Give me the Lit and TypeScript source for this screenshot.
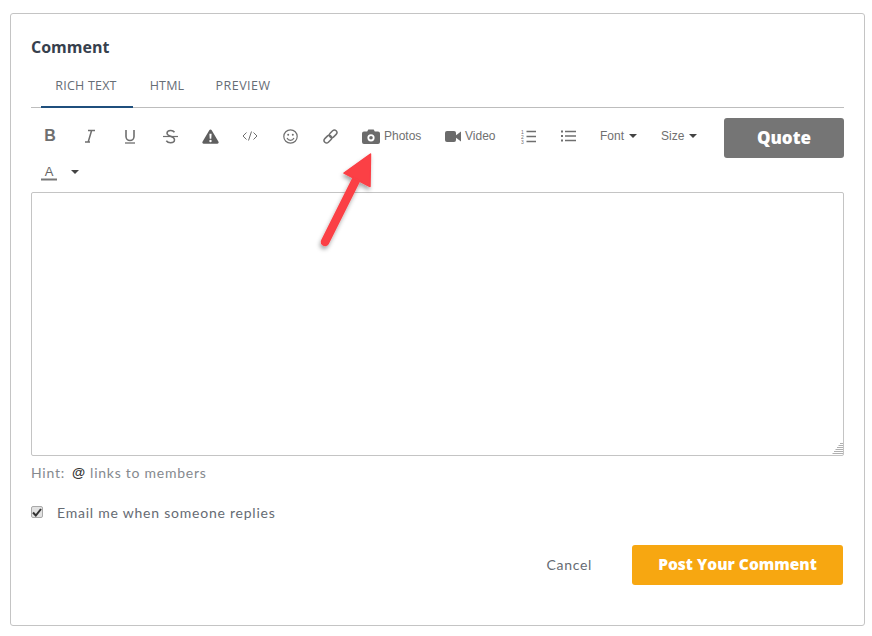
import { LitElement, html, css, svg } from "lit";
import { customElement } from "lit/decorators.js";

const ic = (w: number, h: number, body: unknown) =>
  html`<svg width=${w} height=${h} viewBox="0 0 ${w} ${h}" aria-hidden="true">${body}</svg>`;

@customElement("app-root")
export class AppRoot extends LitElement {
  static styles = css`
    :host { display: block; width: 872px; height: 636px; background: #fff; font-family: Lato, "Open Sans", sans-serif; box-sizing: border-box; padding: 13px 7px 0 10px; position: relative; }
    * { box-sizing: border-box; }
    .card { width: 855px; height: 613px; border: 1px solid #c4c4c4; border-radius: 3px; padding: 0 20px; }
    h2 { margin: 0; padding-top: 22px; height: 49px; font: 700 16px/22px "Open Sans", sans-serif; color: #36404d; }
    .tabs { display: flex; height: 45px; border-bottom: 1px solid #bdbdbd; }
    .tab { font: 400 12.5px/16px "Open Sans", sans-serif; color: #666d75; height: 45px; padding-top: 15px; text-align: center; letter-spacing: 0.2px; white-space: nowrap; }
    .tab.on { width: 92px; margin-left: 10px; padding-right: 2px; border-bottom: 2px solid #1f4f7d; }
    .tab.h { width: 68px; }
    .tab.p { width: 68px; margin-left: 8px; letter-spacing: 0.45px; }
    .toolbar { display: flex; justify-content: space-between; padding-top: 10px; height: 84px; }
    .rows { display: flex; flex-direction: column; margin-left: -1px; }
    .row { display: flex; height: 36px; align-items: center; }
    .b { width: 40px; height: 36px; display: flex; align-items: center; justify-content: center; color: #6f6f6f; font-family: "Liberation Sans", sans-serif; }
    .bold { font-weight: 700; font-size: 16px; }
    .l { font-size: 12px; color: #707070; font-family: "Liberation Sans", sans-serif; display: flex; align-items: center; height: 36px; }
    .photos { margin-left: 12px; width: 83px; gap: 4px; }
    .video { width: 60px; gap: 4px; }
    .ol { margin-left: 3px; }
    .font { margin-left: 12px; width: 61px; gap: 5px; }
    .size { width: 38px; gap: 5px; }
    .caret { width: 0; height: 0; border-left: 4px solid transparent; border-right: 4px solid transparent; border-top: 4px solid #444; }
    .color { width: 38px; }
    .color-caret { margin-left: 3px; margin-top: -1px; }
    .quote { width: 120px; height: 40px; background: #757575; color: #fff; border-radius: 3px; font: 800 17px/40px "Open Sans", sans-serif; text-align: center; }
    .ta { height: 264px; border: 1px solid #c4c4c4; border-radius: 2px; position: relative; }
    .grip { position: absolute; right: 0; bottom: 0; }
    .hint { margin-top: 8px; font-size: 14px; line-height: 18px; color: #85898e; letter-spacing: 0.75px; display: flex; }
    .at { color: #333; font-family: "Liberation Sans", sans-serif; font-weight: 700; margin-left: 7px; margin-right: 5px; font-size: 13.5px; letter-spacing: 0; }
    .email { margin-top: 22px; display: flex; align-items: center; font-size: 14px; line-height: 18px; color: #666b73; letter-spacing: 0.77px; }
    .cb { width: 12px; height: 12px; border: 1px solid #a9a9a9; border-radius: 2px; background: #e2e2e2; display: flex; align-items: center; justify-content: center; margin-right: 14px; margin-bottom: 2px; }
    .actions { display: flex; justify-content: flex-end; align-items: center; margin-top: 23px; }
    .cancel { font-size: 14px; letter-spacing: 0.7px; color: #666b73; margin-right: 40px; margin-bottom: 2px; }
    .post { width: 211px; height: 40px; margin-right: 1px; background: #f7a711; color: #fff; border-radius: 3px; font: 800 15.5px/38px "Open Sans", sans-serif; text-align: center; }
    .arrow { position: absolute; left: 310px; top: 150px; }
  `;

  render() {
    const stroke = "#6f6f6f";
    return html`<div class="card">
      <h2>Comment</h2>
      <div class="tabs">
        <div class="tab on">RICH TEXT</div><div class="tab h">HTML</div><div class="tab p">PREVIEW</div>
      </div>
      <div class="toolbar">
        <div class="rows">
          <div class="row">
            <div class="b bold">B</div>
            <div class="b">${ic(14, 14, svg`<path d="M5 1.500h7M2 13h5M8.600 1.500 5.200 13" stroke=${stroke} stroke-width="1.500" fill="none"/>`)}</div>
            <div class="b">${ic(12, 15, svg`<path d="M2 1v6.500a4 4 0 0 0 8 0V1" stroke=${stroke} stroke-width="1.600" fill="none"/><path d="M1 14h10" stroke=${stroke} stroke-width="1.300"/>`)}</div>
            <div class="b">${ic(15, 15, svg`<path d="M11.500 3.200C10.500 1.800 9 1.300 7.500 1.400 5.500 1.500 4 2.600 4 4.200c0 3.600 7.500 2.500 7.500 6.600 0 1.800-1.700 3-4 3-1.700 0-3.300-.7-4.200-2" stroke=${stroke} stroke-width="1.500" fill="none"/><path d="M0 7.500h15" stroke=${stroke} stroke-width="1.200"/>`)}</div>
            <div class="b">${ic(17, 15, svg`<path fill-rule="evenodd" d="M8.500.5c.5 0 1 .3 1.200.7l6.800 11.600c.5.900-.1 1.900-1.200 1.900H1.700c-1.100 0-1.700-1-1.200-1.900L7.300 1.200c.2-.4.700-.7 1.200-.7ZM7.400 4.800l.3 5h1.600l.3-5H7.400Zm1.100 6a1.200 1.200 0 1 0 0 2.400 1.200 1.200 0 0 0 0-2.400Z" fill="#5f5f5f"/>`)}</div>
            <div class="b">${ic(16, 10, svg`<path d="M4.500 1.500 1 5l3.500 3.500M11.500 1.500 15 5l-3.500 3.500M9.500.5l-3 9" stroke=${stroke} stroke-width="1" fill="none"/>`)}</div>
            <div class="b">${ic(15, 15, svg`<circle cx="7.500" cy="7.500" r="6.700" stroke=${stroke} stroke-width="1.200" fill="none"/><circle cx="5.200" cy="5.800" r="1" fill=${stroke}/><circle cx="9.800" cy="5.800" r="1" fill=${stroke}/><path d="M4 9c.8 1.600 2 2.300 3.500 2.300S10.200 10.600 11 9" stroke=${stroke} stroke-width="1.200" fill="none"/>`)}</div>
            <div class="b">${ic(15, 15, svg`<g transform="rotate(-45 7.500 7.500)" stroke=${stroke} stroke-width="1.500" fill="none"><rect x="-.5" y="5" width="8.500" height="5" rx="2.500"/><rect x="7" y="5" width="8.500" height="5" rx="2.500"/></g>`)}</div>
            <div class="l photos">${ic(18, 15, svg`<path fill-rule="evenodd" d="M2 2.500h3.200L6.300.5h5.400l1.100 2H16a2 2 0 0 1 2 2V13a2 2 0 0 1-2 2H2a2 2 0 0 1-2-2V4.500a2 2 0 0 1 2-2Zm7 2.700a3.600 3.600 0 1 0 0 7.200 3.600 3.600 0 0 0 0-7.200Zm0 1.800a1.800 1.800 0 1 1 0 3.600 1.800 1.800 0 0 1 0-3.600Z" fill="#6b6b6b"/>`)}<span>Photos</span></div>
            <div class="l video">${ic(16, 13, svg`<rect x="0" y="1" width="11" height="11" rx="2" fill="#6b6b6b"/><path d="M11 5.200 16 1.500v10L11 7.800Z" fill="#6b6b6b"/>`)}<span>Video</span></div>
            <div class="b ol">${ic(15, 15, svg`<path d="M5.500 2.500H15M5.500 7.500H15M5.500 12.500H15" stroke=${stroke} stroke-width="1.500"/><text x="0" y="4.500" font-size="5" font-family="Liberation Sans" fill=${stroke}>1</text><text x="0" y="9.500" font-size="5" font-family="Liberation Sans" fill=${stroke}>2</text><text x="0" y="14.500" font-size="5" font-family="Liberation Sans" fill=${stroke}>3</text>`)}</div>
            <div class="b">${ic(15, 12, svg`<path d="M4 1.500h11M4 6h11M4 10.500h11" stroke=${stroke} stroke-width="1.500"/><path d="M0 1.500h2M0 6h2M0 10.500h2" stroke=${stroke} stroke-width="1.800"/>`)}</div>
            <div class="l font"><span>Font</span><i class="caret"></i></div>
            <div class="l size"><span>Size</span><i class="caret"></i></div>
          </div>
          <div class="row">
            <div class="b color">${ic(16, 17, svg`<text x="8" y="11.500" text-anchor="middle" font-size="13" font-family="Liberation Sans" fill="#666">A</text><path d="M0 15.500h16" stroke="#777" stroke-width="2"/>`)}</div>
            <i class="caret color-caret"></i>
          </div>
        </div>
        <div class="quote">Quote</div>
      </div>
      <div class="ta">
        <svg class="grip" width="11" height="13" viewBox="0 0 11 13" aria-hidden="true"><path d="M8 1.500h3M6.500 3.500H11M5 5.500h6M3.500 7.500H11M2 9.500h9M.5 11.500H11" stroke="#b0b0b0" stroke-width="1" fill="none"/></svg>
      </div>
      <div class="hint"><span>Hint:</span><span class="at">@</span><span>links to members</span></div>
      <div class="email"><span class="cb"><svg width="10" height="9" viewBox="0 0 10 9" aria-hidden="true"><path d="M1 4.500 3.800 7.500 9 1" stroke="#333" stroke-width="2" fill="none"/></svg></span><span>Email me when someone replies</span></div>
      <div class="actions"><span class="cancel">Cancel</span><div class="post">Post Your Comment</div></div>
    </div>
    <svg class="arrow" width="70" height="105" viewBox="0 0 70 105" aria-hidden="true">
      <defs><filter id="s" x="-30%" y="-30%" width="160%" height="160%"><feDropShadow dx="-1" dy="3" stdDeviation="2" flood-color="#000" flood-opacity=".35"/></filter></defs>
      <g filter="url(#s)"><path d="M15 92 46 30" stroke="#fb3f45" stroke-width="8.500" stroke-linecap="round"/><path d="M60.500 4 34 23 60 36.500Z" fill="#fb3f45" stroke="#fb3f45" stroke-width="1.500" stroke-linejoin="round"/></g>
    </svg>`;
  }
}
